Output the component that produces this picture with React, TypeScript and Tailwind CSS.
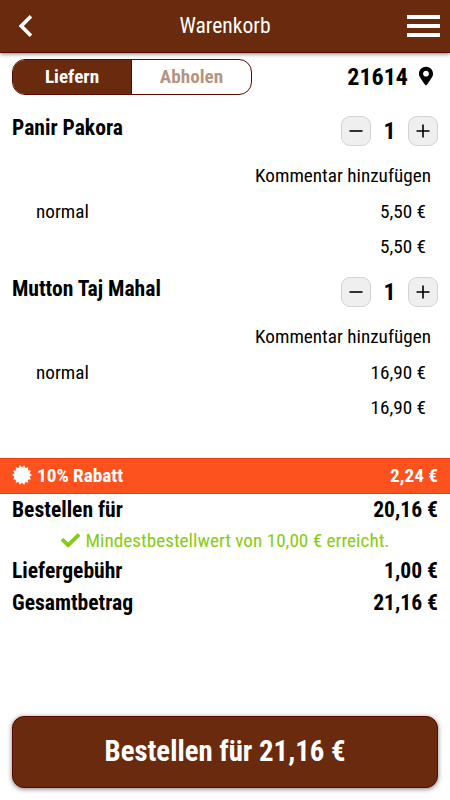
import { FaCheck, FaMapMarkerAlt } from 'react-icons/fa';
import { MdChevronLeft } from 'react-icons/md';

interface CartEntry {
  name: string;
  variant: string;
  quantity: number;
  price: string;
}

const items: CartEntry[] = [
  { name: 'Panir Pakora', variant: 'normal', quantity: 1, price: '5,50 €' },
  { name: 'Mutton Taj Mahal', variant: 'normal', quantity: 1, price: '16,90 €' },
];

// Star-shaped seal with short spikes
const BADGE_SPIKES = 14;
const badgePoints = Array.from({ length: BADGE_SPIKES * 2 }, (_, i) => {
  const r = i % 2 ? 10 : 7.7;
  const a = (i * Math.PI) / BADGE_SPIKES - Math.PI / 2;
  return `${(10 + r * Math.cos(a)).toFixed(2)},${(10 + r * Math.sin(a)).toFixed(2)}`;
}).join(' ');

function StepButton({ plus = false }: { plus?: boolean }) {
  return (
    <button className="w-[30px] h-[30px] flex items-center justify-center rounded-[9px] border border-[#d3d3d3] bg-[#efefef]">
      <svg width="14" height="14" viewBox="0 0 14 14" stroke="#000" strokeWidth="1.6">
        <path d={plus ? 'M.5 7h13M7 .5v13' : 'M.5 7h13'} />
      </svg>
    </button>
  );
}

function CartRow({ item }: { item: CartEntry }) {
  return (
    <div className="h-[161px] px-3 pt-1 text-[19.2px]">
      <div className="flex justify-between items-start h-11">
        <span className="text-[21.6px] leading-[24px] font-bold">{item.name}</span>
        <div className="flex items-center">
          <StepButton />
          <span className="w-[37px] text-center text-2xl leading-[30px] font-bold">{item.quantity}</span>
          <StepButton plus />
        </div>
      </div>
      <div className="h-[34px] leading-[32px] text-right pr-[7px]">Kommentar hinzufügen</div>
      <div className="flex justify-between h-[35px] leading-[35px] pl-6 pr-3">
        <span>{item.variant}</span>
        <span>{item.price}</span>
      </div>
      <div className="h-[35px] leading-[35px] text-right pr-3">{item.price}</div>
    </div>
  );
}

function TotalRow({ label, value }: { label: string; value: string }) {
  return (
    <div className="flex justify-between px-3 text-[21.6px] leading-[32px] font-bold">
      <span>{label}</span>
      <span>{value}</span>
    </div>
  );
}

export default function App() {
  return (
    <div className="w-[450px] h-[800px] flex flex-col overflow-hidden bg-white text-black font-['Roboto_Condensed','Roboto',sans-serif] [font-stretch:75%]">
      {/* Header */}
      <header className="h-[53px] shrink-0 flex items-center justify-between bg-[#6a2a0d] text-white border-b border-[#5a0a00] shadow-[0_1px_4px_rgba(0,0,0,0.5)]">
        <div className="w-[60px] pl-1">
          <MdChevronLeft size={44} />
        </div>
        <h1 className="text-[21.6px]">Warenkorb</h1>
        <div className="w-[60px] pr-[10px] flex flex-col items-end gap-[5px]">
          <span className="w-[33px] h-1 bg-white" />
          <span className="w-[33px] h-1 bg-white" />
          <span className="w-[33px] h-1 bg-white" />
        </div>
      </header>

      {/* Delivery mode */}
      <div className="h-[59px] shrink-0 flex justify-between items-start px-3 pt-[6px]">
        <div className="w-[240px] h-9 flex rounded-[13px] overflow-hidden border border-[#5a0a00] text-[19.2px] leading-[34px] font-bold text-center">
          <span className="w-[119px] bg-[#6a2a0d] text-white border-r border-[#5a0a00]">Liefern</span>
          <span className="flex-1 text-[#b49583]">Abholen</span>
        </div>
        <div className="flex items-center gap-[11px] pr-[5px] h-9 text-2xl font-bold">
          <span>21614</span>
          <FaMapMarkerAlt className="w-[14px] h-5 mb-[2px]" />
        </div>
      </div>

      {/* Cart */}
      <div className="h-[346px] shrink-0">
        {items.map((item) => (
          <CartRow key={item.name} item={item} />
        ))}
      </div>

      {/* Discount */}
      <div className="h-9 shrink-0 flex items-center justify-between px-3 bg-[#fe521e] border-y border-[#f43a0a] text-white text-[19.2px] font-bold">
        <span className="flex items-center gap-[5px]">
          <svg width="20" height="20" viewBox="0 0 20 20" fill="currentColor" className="mb-[2px]">
            <polygon points={badgePoints} />
          </svg>
          10% Rabatt
        </span>
        <span>2,24 €</span>
      </div>

      {/* Totals */}
      <TotalRow label="Bestellen für" value="20,16 €" />
      <div className="flex items-center justify-center gap-[6px] text-[19.2px] leading-[29px] text-[#87cc12]">
        <FaCheck size={19} />
        Mindestbestellwert von 10,00 € erreicht.
      </div>
      <TotalRow label="Liefergebühr" value="1,00 €" />
      <TotalRow label="Gesamtbetrag" value="21,16 €" />

      <button className="mt-auto mb-3 mx-3 h-[72px] shrink-0 rounded-xl bg-[#6a2a0d] border border-[#5a0a00] text-white text-[28.8px] font-bold shadow-[0_1px_5px_rgba(0,0,0,0.5)]">
        Bestellen für 21,16 €
      </button>
    </div>
  );
}
